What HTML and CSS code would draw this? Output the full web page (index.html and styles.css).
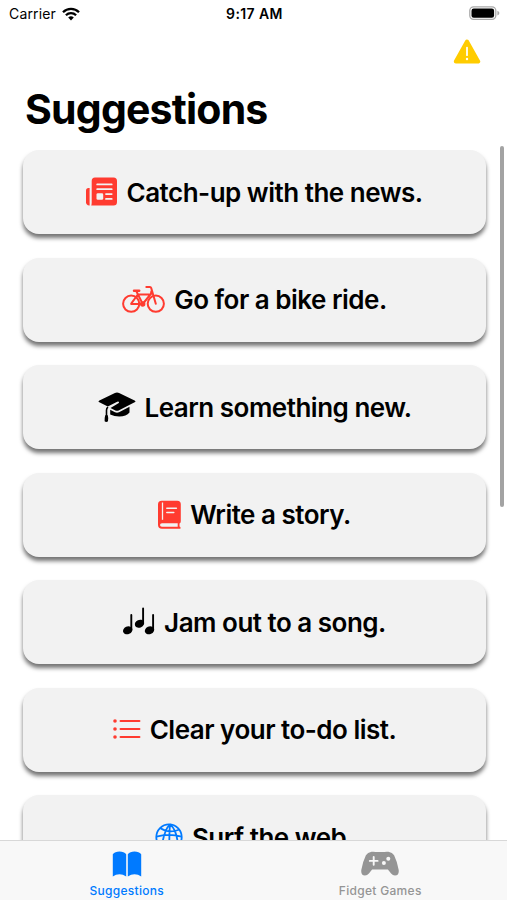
FILE: index.html
```html
<!DOCTYPE html>
<html lang="en">
<head>
  <meta charset="UTF-8" />
  <title>Suggestions</title>
  <link rel="stylesheet" href="styles.css">
</head>
<body>
  <div class="status-bar">
    <div class="carrier">
      <span>Carrier</span>
      <svg width="18" height="14" viewBox="0 0 18 14" fill="none" stroke="#000" stroke-width="2.3">
        <path d="M1 5.2a11.4 11.4 0 0 1 16 0" />
        <path d="M3.9 8.3a7.3 7.3 0 0 1 10.2 0" />
        <path d="M9 13.4 6.2 10.6a4 4 0 0 1 5.6 0z" fill="#000" stroke="none" />
      </svg>
    </div>
    <span class="time">9:17 AM</span>
    <svg class="battery" width="31" height="15" viewBox="0 0 31 15">
      <rect x="0.8" y="0.8" width="26" height="12.6" rx="3.8" fill="#fff" stroke="#a9a9a9" stroke-width="1.3" />
      <rect x="2.5" y="2.5" width="22.6" height="9.2" rx="2.2" />
      <path d="M28.4 4.7q2 .8 2 2.4t-2 2.4z" fill="#a9a9a9" />
    </svg>
  </div>

  <header>
    <svg class="warning" width="28" height="26" viewBox="0 0 28 26">
      <path d="M14 2.6 25.2 22.6H2.8z" fill="#fc0" stroke="#fc0" stroke-width="4" stroke-linejoin="round" />
      <path d="M14 8.6v7.6" stroke="#fff" stroke-width="1.8" stroke-linecap="round" />
      <circle cx="14" cy="20" r="1.2" fill="#fff" />
    </svg>
    <h1>Suggestions</h1>
  </header>

  <main>
    <div class="card">
      <svg width="31" height="30" viewBox="0 0 31 30">
        <path d="M3.600 11v17.400C1.500 28.600 0 27.300 0 25.200V13.500q0-2.500 2.500-2.500z" fill="#ff3b30" />
        <path d="M9 .5h18.500q3.500 0 3.500 3.500v21q0 3.500-3.500 3.500H5.200q.5-1 .5-3V4Q5.700.5 9 .5z" fill="#ff3b30" />
        <path d="M11.200 7.400h14.500M11.200 12.200h14.500M20 17.100h5.700M20 21.900h5.700" stroke="#f2f2f2" stroke-width="1.800" stroke-linecap="round" />
        <rect x="10.500" y="16.200" width="6.700" height="6.600" rx="1.300" fill="#f2f2f2" />
      </svg>
      <span>Catch-up with the news.</span>
    </div>
    <div class="card">
      <svg width="43" height="30" viewBox="0 0 43 30" fill="none" stroke="#ff3b30" stroke-width="2" stroke-linecap="round" stroke-linejoin="round">
        <circle cx="9.200" cy="18.700" r="8.100" />
        <circle cx="33.800" cy="18.700" r="8.100" />
        <path d="M12 5.800h5.200" stroke-width="2.400" />
        <path d="M14.500 6.500 20.700 19M9.200 18.700l6.600-9.200h12.600L20.700 19H9.200M24.300 2h3.600q1 0 1.300 1l4.600 15.700M28.800 9.500l.6-3.200" />
        <circle cx="20.700" cy="19" r="1.700" fill="#ff3b30" />
      </svg>
      <span>Go for a bike ride.</span>
    </div>
    <div class="card">
      <svg width="38" height="32" viewBox="0 0 38 32">
        <path d="M1.400 9.500 16.900 2.100q2.100-1 4.200 0l15.500 7.400q1.700.9 0 1.800l-15.500 8q-2.100 1-4.200 0L12.500 17l7.900-4.700q1-.8.3-1.500-.6-.5-1.500 0l-9.400 4.800-8.400-4.300q-1.700-.9 0-1.800z" />
        <path d="M12.200 18.800 17 21.200q2 .9 4 0l10.500-5.400v5.800q-3.200 4-10.200 4-5.100 0-9.100-2z" />
        <path d="M10 16.200q-1.500 1-1.500 3v6" fill="none" stroke="#000" stroke-width="1.600" />
        <path d="M7.200 24.200h2.600q.8 2.800.2 6.100-1.700 1.300-3.400 0-.2-3.200.6-6.100z" />
      </svg>
      <span>Learn something new.</span>
    </div>
    <div class="card">
      <svg width="23" height="30" viewBox="0 0 23 30">
        <path d="M3.700.8h15.600q3.500 0 3.500 3.500v16.900q0 1.800-1.300 2.200v3.200q1.100.5 1.100 1.300 0 .9-1.100.9H4Q0 28.800 0 24.800V4.500Q0 .8 3.700.8z" fill="#ff3b30" />
        <path d="M4 23.300h15.700v3.400H4q-2-.2-2-1.700t2-1.700z" fill="#f2f2f2" />
        <path d="M4.500 2.500v17.300" stroke="#f2f2f2" stroke-width="1.300" />
        <path d="M8.800 8.200h9.600M8.800 12.500h7" stroke="#f2f2f2" stroke-width="1.500" stroke-linecap="round" />
      </svg>
      <span>Write a story.</span>
    </div>
    <div class="card">
      <svg width="32" height="30" viewBox="0 0 32 30">
        <g fill="none" stroke="#000" stroke-width="1.900" stroke-linecap="round">
          <path d="M8.300 8v15M20.100 1.500v15M30.100 8v15" />
        </g>
        <ellipse cx="4.700" cy="23.300" rx="4.800" ry="3.900" transform="rotate(-24 4.700 23.300)" />
        <ellipse cx="16.500" cy="16.700" rx="4.800" ry="3.900" transform="rotate(-24 16.500 16.700)" />
        <ellipse cx="26.500" cy="23.300" rx="4.800" ry="3.900" transform="rotate(-24 26.500 23.300)" />
      </svg>
      <span>Jam out to a song.</span>
    </div>
    <div class="card">
      <svg width="28" height="32" viewBox="0 0 28 32" stroke="#ff3b30" stroke-width="1.900" stroke-linecap="round">
        <path d="M7.500 7h19M7.500 15h19M7.500 23h19" />
        <g fill="#ff3b30" stroke="none">
          <circle cx="2" cy="7" r="1.800" />
          <circle cx="2" cy="15" r="1.800" />
          <circle cx="2" cy="23" r="1.800" />
        </g>
      </svg>
      <span>Clear your to-do list.</span>
    </div>
    <div class="card">
      <svg width="28" height="30" viewBox="0 0 28 30" fill="none" stroke="#007aff" stroke-width="1.800">
        <circle cx="14" cy="15" r="12.700" />
        <path d="M15 2.300Q9 8 6.800 25M15 2.300Q14 12 14.500 27.600M15 2.300Q22 8 23 24M5 6Q14 12 24.500 7.500M1.300 14.700Q14 11 26.700 14.700" />
      </svg>
      <span>Surf the web.</span>
    </div>
  </main>
  <div class="scrollbar"></div>

  <nav>
    <a class="tab active">
      <svg width="30" height="26" viewBox="0 0 30 26" fill="currentColor">
        <path d="M14.200 3.300v22.200Q11 23.300 7.500 23.300q-3.700 0-6.700 2.200V3.300Q3 .6 7.500.6t6.700 2.700z" />
        <path d="M15.800 3.300v22.200q3.200-2.200 6.700-2.200 3.700 0 6.700 2.200V3.300Q27 .6 22.500.6t-6.700 2.700z" />
      </svg>
      <span>Suggestions</span>
    </a>
    <a class="tab">
      <svg width="38" height="26" viewBox="0 0 38 26">
        <path d="M10.500.8q2-.4 4.300.2h8.400q2.300-.6 4.300-.2 4 .6 5.600 3.500 3.400 7 4.600 14.700.6 5.500-3.700 5.500-2.200 0-3.900-2l-3.200-4H11.100l-3.200 4q-1.700 2-3.900 2-4.300 0-3.700-5.500Q1.500 11.300 4.900 4.300 6.500 1.400 10.500.8z" fill="currentColor" />
        <path d="M8.800 9.900h7.800M12.700 6v7.800" stroke="#f8f8f8" stroke-width="1.900" stroke-linecap="round" />
        <circle cx="22.900" cy="12" r="2" fill="#f8f8f8" />
        <circle cx="27.300" cy="7.800" r="2" fill="#f8f8f8" />
      </svg>
      <span>Fidget Games</span>
    </a>
  </nav>
</body>
</html>
```

FILE: styles.css
```css
body {
  margin: 0;
  height: 900px;
  display: flex;
  flex-direction: column;
  overflow: hidden;
  position: relative;
  background-color: #fff;
  color: #000;
  font-family: Inter, sans-serif;
}

svg {
  display: block;
  flex-shrink: 0;
}

.status-bar {
  display: grid;
  grid-template-columns: 1fr auto 1fr;
  align-items: center;
  height: 27px;
  padding: 0 7px 0 9px;
  font-size: 14px;
}

.carrier {
  display: flex;
  align-items: center;
  gap: 6px;
  letter-spacing: 0.15px;
}

.time {
  font-weight: 600;
  letter-spacing: 0.4px;
}

.battery {
  justify-self: end;
}

header {
  height: 123px;
  box-sizing: border-box;
  padding: 12px 26px 0 25px;
}

.warning {
  margin-left: auto;
}

h1 {
  margin: 19px 0 0;
  font-size: 41px;
  line-height: 50px;
  font-weight: 700;
  letter-spacing: -0.8px;
}

main {
  flex: 1;
  min-height: 0;
  display: flex;
  flex-direction: column;
  gap: 23.5px;
  padding: 0 21px 0 23px;
  overflow: hidden;
}

.card {
  flex: none;
  height: 84px;
  display: flex;
  align-items: center;
  justify-content: center;
  gap: 9px;
  border-radius: 16px;
  background-color: #f2f2f2;
  box-shadow: 0 4px 4px rgba(0, 0, 0, 0.55);
  font-size: 26px;
  font-weight: 600;
  letter-spacing: -0.5px;
  white-space: nowrap;
}

.scrollbar {
  position: absolute;
  top: 146px;
  right: 3px;
  width: 4px;
  height: 361px;
  border-radius: 2px;
  background-color: #a3a3a3;
}

nav {
  display: flex;
  height: 60px;
  box-sizing: border-box;
  border-top: 1px solid #d8d8d8;
  background-color: #f8f8f8;
}

.tab {
  flex: 1;
  display: flex;
  flex-direction: column;
  align-items: center;
  padding-top: 10px;
  gap: 6px;
  color: #959595;
  font-size: 12px;
  line-height: 15px;
  font-weight: 500;
  letter-spacing: 0.3px;
}

.active {
  color: #007aff;
}
```
